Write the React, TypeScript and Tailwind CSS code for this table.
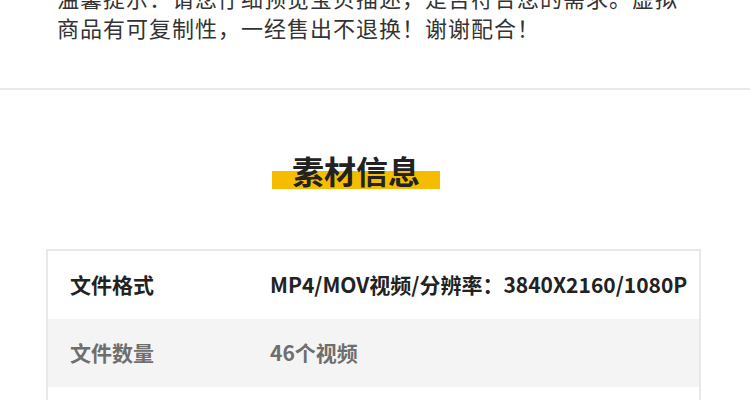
const rows = [
  { label: "文件格式", value: "MP4/MOV视频/分辨率：3840X2160/1080P" },
  { label: "文件数量", value: "46个视频" },
  { label: "", value: "" },
];

export default function App() {
  return (
    <div
      className="w-[750px] h-[400px] overflow-hidden bg-white"
      style={{ fontFamily: '"Noto Sans CJK SC", "Noto Sans", sans-serif' }}
    >
      <div className="px-[57px] mt-[-18px] pb-[46px]">
        <p className="text-[22px] leading-[30px] tracking-[1px] text-[#333]">
          温馨提示：请您仔细预览宝贝描述，是否符合您的需求。虚拟商品有可复制性，一经售出不退换！谢谢配合！
        </p>
      </div>
      <div className="h-[2px] bg-[#e8e8e8]" />

      <div className="flex justify-center pr-[38px] pt-[64px]">
        <div className="relative px-5">
          <div className="absolute inset-x-0 top-[17px] h-[18px] bg-[#f6bd00]" />
          <h2 className="relative text-[32px] leading-[32px] font-bold text-[#222]">
            素材信息
          </h2>
        </div>
      </div>

      <div className="ml-[46px] mt-[63px] w-[655px] border-2 border-[#e8e8e8]">
        {rows.map((r, i) => (
          <div
            key={i}
            className={`flex items-center h-[68px] pl-[22px] text-[21px] font-bold whitespace-nowrap ${
              i % 2 === 1 ? "bg-[#f4f4f4] text-[#6e6e6e]" : "bg-white text-[#222]"
            }`}
          >
            <div className="w-[200px] shrink-0">{r.label}</div>
            <div>{r.value}</div>
          </div>
        ))}
      </div>
    </div>
  );
}
